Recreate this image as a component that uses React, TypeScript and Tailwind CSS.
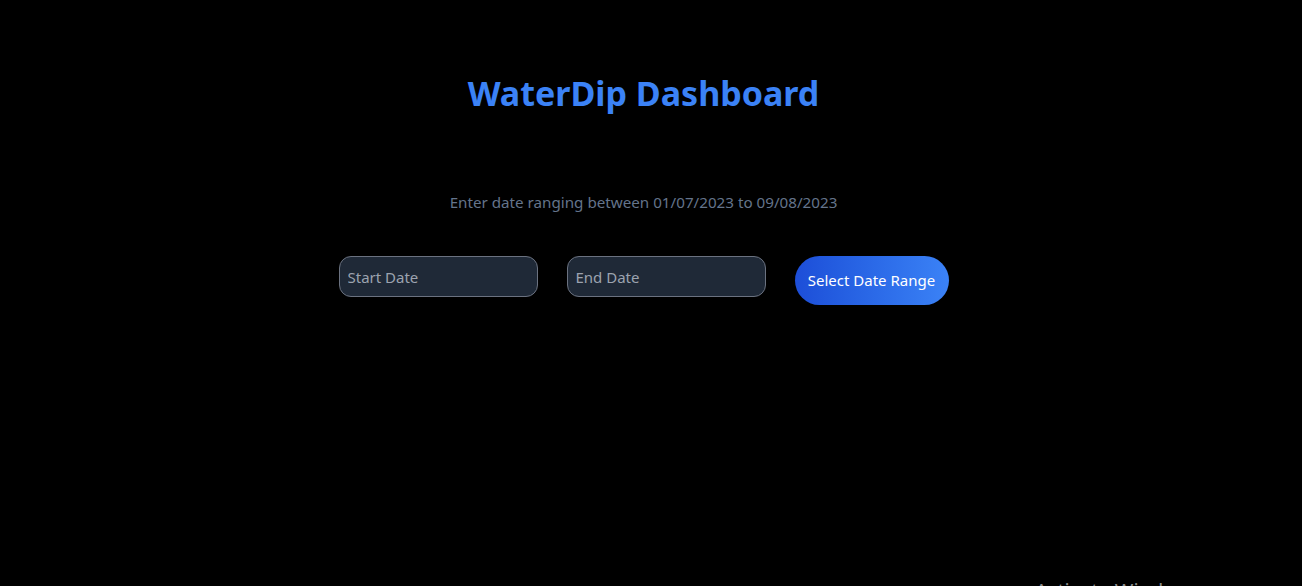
export default function App() {
  return (
    <div
      className="relative h-[586px] w-full overflow-hidden bg-black pr-[15px]"
      style={{ fontFamily: '"Noto Sans", "Open Sans", sans-serif' }}
    >
      <div className="flex flex-col items-center">
        <h1 className="mt-[70px] text-[34px] font-bold leading-[46px] text-[#3b82f6]">
          WaterDip Dashboard
        </h1>
        <p className="mt-[76px] text-[15.2px] leading-[20px] text-[#64748b]">
          Enter date ranging between 01/07/2023 to 09/08/2023
        </p>
        <div className="mt-[44px] flex items-start gap-[29px]">
          <input
            placeholder="Start Date"
            className="h-[41px] w-[199px] rounded-xl border border-[#6b7280] bg-[#1f2937] px-2 text-[15px] text-gray-300 placeholder:text-[#9ca3af] outline-none"
          />
          <input
            placeholder="End Date"
            className="h-[41px] w-[199px] rounded-xl border border-[#6b7280] bg-[#1f2937] px-2 text-[15px] text-gray-300 placeholder:text-[#9ca3af] outline-none"
          />
          <button className="h-[49px] w-[154px] rounded-full bg-gradient-to-r from-[#1d4ed8] to-[#3b82f6] text-[15px] text-white">
            Select Date Range
          </button>
        </div>
      </div>
      <div className="absolute left-[1035px] top-[576px] text-[20px] text-[#8a8a8a]">
        Activate Windows
      </div>
    </div>
  );
}
